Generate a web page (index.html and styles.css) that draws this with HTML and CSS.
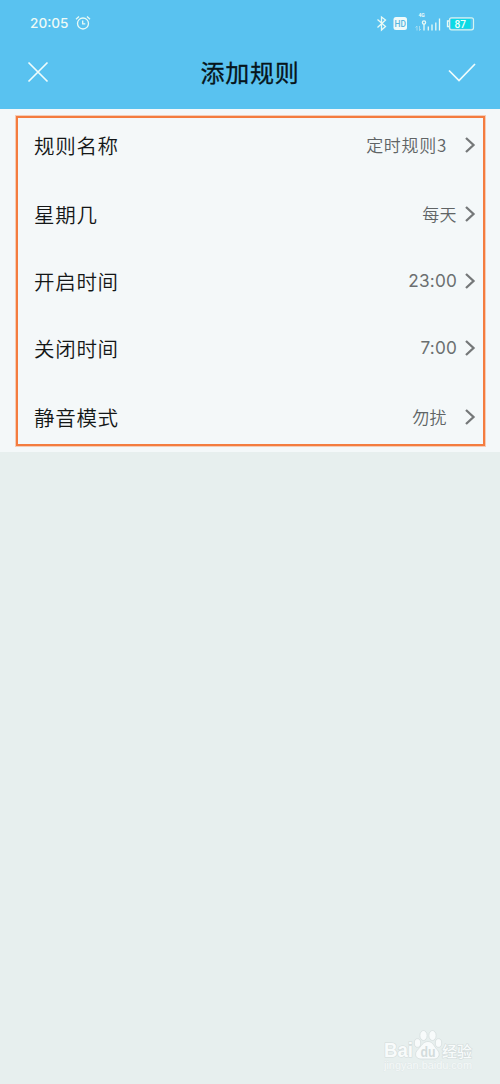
FILE: index.html
```
<!DOCTYPE html>
<html lang="zh-CN">
<head>
<meta charset="utf-8">
<title>添加规则</title>
<link rel="stylesheet" href="styles.css">
</head>
<body>
<header class="top">
  <div class="status">
    <span class="clock">20:05</span>
    <svg class="alarm" width="16" height="16" viewBox="0 0 16 16"><circle cx="8" cy="8.500" r="5.500"/><path d="M7.700 5.500v3.400h2.600M1 4.200 4 1.500M15 4.200 12 1.500"/></svg>
    <svg class="signals" width="100" height="30" viewBox="0 0 100 30">
      <path class="line" d="M2.500 11.500 10.500 18.500 6.500 22V9l4 3-8 7.500"/>
      <rect class="fill" x="18.500" y="9" width="13.500" height="13" rx="2.500"/>
      <text class="hd" x="19.500" y="19" textLength="11.500" lengthAdjust="spacingAndGlyphs">HD</text>
      <text class="net" x="43.500" y="9">4G</text>
      <path class="thin" d="M42 18v4.500M40.500 19.500l1.500-1.500M44.500 18v4.500M44.500 22.500l1.500-1.500"/>
      <circle class="line" cx="49" cy="14.500" r="1.600"/>
      <path class="line" d="M49 16v6.500M53.300 18.500v4M57 16.500v6M60.800 14.500v8M64.500 10.500v12"/>
      <path class="line" d="M74 13h-1.500v5.500H74"/>
      <rect class="battery" x="74.500" y="9.800" width="24" height="12" rx="2"/>
      <rect class="charge" x="76" y="11" width="19.500" height="9.600"/>
      <text class="level" x="79.500" y="19.800" textLength="11.500" lengthAdjust="spacingAndGlyphs">87</text>
    </svg>
  </div>
  <div class="titlebar">
    <svg width="22" height="22" viewBox="0 0 22 22"><path d="M1.500 1.500 20.500 20.500M20.500 1.500 1.500 20.500"/></svg>
    <h1>添加规则</h1>
    <svg width="28" height="20" viewBox="0 0 28 20"><path d="M1 8.500 11 18.500 27 2"/></svg>
  </div>
</header>
<main class="rules">
  <div class="row"><span class="label">规则名称</span><span class="value wide">定时规则3</span><svg class="chevron" width="12" height="18" viewBox="0 0 12 18"><path d="M2 2 9.500 9 2 16"/></svg></div>
  <div class="row"><span class="label">星期几</span><span class="value">每天</span><svg class="chevron" width="12" height="18" viewBox="0 0 12 18"><path d="M2 2 9.500 9 2 16"/></svg></div>
  <div class="row"><span class="label">开启时间</span><span class="value time">23:00</span><svg class="chevron" width="12" height="18" viewBox="0 0 12 18"><path d="M2 2 9.500 9 2 16"/></svg></div>
  <div class="row"><span class="label">关闭时间</span><span class="value time">7:00</span><svg class="chevron" width="12" height="18" viewBox="0 0 12 18"><path d="M2 2 9.500 9 2 16"/></svg></div>
  <div class="row"><span class="label">静音模式</span><span class="value wide">勿扰</span><svg class="chevron" width="12" height="18" viewBox="0 0 12 18"><path d="M2 2 9.500 9 2 16"/></svg></div>
  <div class="highlight"></div>
</main>
<svg class="watermark" width="94" height="50" viewBox="0 0 94 50">
  <text class="brand" x="2" y="31" textLength="29" lengthAdjust="spacingAndGlyphs">Bai</text>
  <ellipse cx="35.500" cy="17" rx="3.200" ry="4.300"/>
  <ellipse cx="41.500" cy="9.500" rx="3.600" ry="5"/>
  <ellipse cx="50.500" cy="9.500" rx="3.600" ry="5"/>
  <ellipse cx="56.500" cy="17" rx="3.200" ry="4.300"/>
  <path d="M46 15.500c5 0 6 5 9 8 4 4 2 9.500-3 9.500H39c-6 0-7-6-3-9.500 3-3 5-8 10-8z"/>
  <text class="du" x="38.500" y="30.500" textLength="15" lengthAdjust="spacingAndGlyphs">du</text>
  <text class="cn" x="60" y="30.500" textLength="30">经验</text>
  <text class="site" x="2" y="43" textLength="88" lengthAdjust="spacingAndGlyphs">jingyan.baidu.com</text>
</svg>
</body>
</html>
```
FILE: styles.css
```
body {
  margin: 0;
  position: relative;
  min-height: 1084px;
  background: #e7efee;
  font-family: "Noto Sans CJK SC", sans-serif;
}
.top {
  height: 109px;
  background: #59c2f0;
}
.status {
  display: flex;
  align-items: center;
  height: 46px;
  padding: 0 25px 0 30px;
  color: #eefaf6;
}
.clock {
  font: 500 13.6px/20px Inter, sans-serif;
  width: 39px;
  margin-right: 6px;
}
.alarm, .signals .line {
  fill: none;
  stroke: #e9faf5;
  stroke-width: 1.3;
}
.signals { margin-left: auto; margin-top: -1px; }
.signals .fill, .signals .net { fill: #effafa; }
.signals text { font-family: Roboto, sans-serif; }
.signals .hd { font-size: 9px; font-weight: 500; fill: #59b6df; }
.signals .net { font-size: 5px; font-weight: 700; }
.signals .thin { fill: none; stroke: #b2e2f2; stroke-width: .8; }
.signals .battery { fill: none; stroke: #d5f5ef; stroke-width: 1.2; }
.signals .charge { fill: #0bdae5; }
.signals .level { font-size: 11px; font-weight: 500; fill: #effffa; }
.titlebar {
  display: flex;
  align-items: center;
  justify-content: space-between;
  height: 52px;
  padding: 0 24px 0 27px;
}
.titlebar svg {
  fill: none;
  stroke: #effcfc;
  stroke-width: 1.7;
}
.titlebar h1 {
  margin: 0 0 0 3px;
  font-size: 24px;
  line-height: 36px;
  font-weight: 400;
  letter-spacing: .8px;
  color: #07151b;
  -webkit-text-stroke: .3px #07151b;
}
.rules {
  position: relative;
  display: grid;
  grid-template-rows: 72px 66px 68px 66px 71px;
  background: #f4f8f9;
}
.row {
  display: flex;
  align-items: center;
  padding: 0 24px 0 34px;
}
.label {
  flex: 1;
  font-size: 20.5px;
  font-weight: 350;
  line-height: 30px;
  letter-spacing: .7px;
  color: #141717;
}
.value {
  margin-right: 7px;
  font-size: 17px;
  font-weight: 350;
  line-height: 26px;
  letter-spacing: .4px;
  color: #606465;
}
.value.wide { margin-right: 17px; }
.row:first-child .value { letter-spacing: .7px; }
.value.time {
  font-family: Inter, sans-serif;
  font-size: 17.2px;
  font-weight: 400;
  letter-spacing: .2px;
  color: #6b6f70;
}
.chevron {
  fill: none;
  stroke: #757879;
  stroke-width: 2.3;
}
.highlight {
  position: absolute;
  top: 7px;
  left: 16px;
  width: 465px;
  height: 326px;
  border: 2px solid #f47c3f;
  box-shadow: 0 0 0 1px rgb(247 150 100 / 45%);
}
.watermark {
  position: absolute;
  left: 382px;
  top: 1026px;
  fill: #f8fbfb;
  stroke: #d3dbdb;
  stroke-width: .7;
}
.watermark text { font-family: "Liberation Sans", "Noto Sans CJK SC", sans-serif; paint-order: stroke; }
.watermark .brand { font-size: 20px; font-weight: 700; stroke-width: 1.2; }
.watermark .du { font-size: 15px; font-weight: 700; fill: #d3dcdc; stroke: none; }
.watermark .cn { font-size: 15px; font-weight: 500; stroke-width: 1.2; }
.watermark .site { font-size: 11px; fill: #f5f9f9; stroke: #dde5e5; stroke-width: .6; }
```
